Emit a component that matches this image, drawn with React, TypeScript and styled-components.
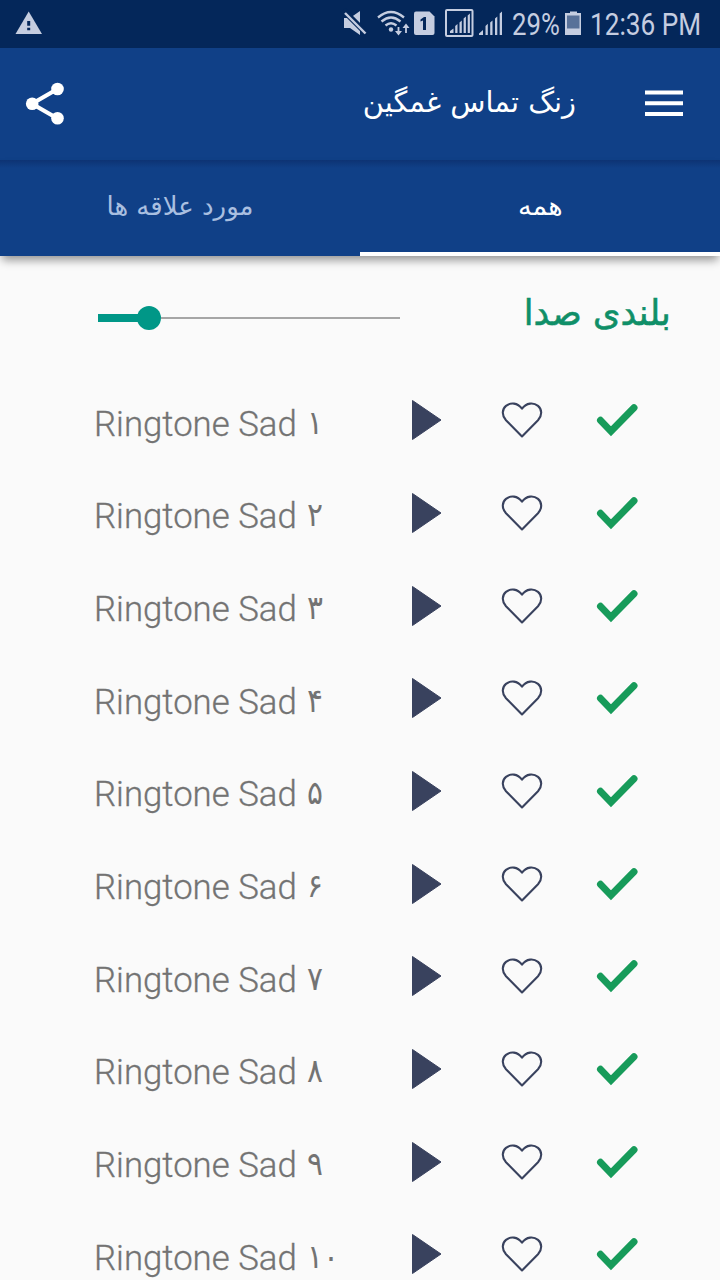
import React from 'react';
import styled, { createGlobalStyle } from 'styled-components';

const GlobalStyle = createGlobalStyle`
  * { box-sizing: border-box; }
  html, body { margin: 0; padding: 0; background: #fafafa; }
  body { overflow: hidden; }
`;

const persianFont = "'DejaVu Sans', sans-serif";

const Screen = styled.div`
  width: 720px;
  height: 1280px;
  overflow: hidden;
  display: flex;
  flex-direction: column;
  background: #fafafa;
  font-family: Roboto, sans-serif;
`;

const StatusBar = styled.div`
  flex: none;
  height: 48px;
  display: flex;
  align-items: center;
  justify-content: space-between;
  background: #04275a;
  color: #c5cde0;
`;

const StatusIcons = styled.svg`
  display: block;
  flex: none;
`;

const StatusGroup = styled.div`
  display: flex;
  align-items: center;
`;

const Stretch = styled.span<{ $w: number; $scale: number; $size: number }>`
  display: block;
  width: ${(p) => p.$w}px;
  padding-top: 1px;
  font-size: ${(p) => p.$size}px;
  line-height: 48px;
  white-space: nowrap;
  transform: scaleX(${(p) => p.$scale});
  transform-origin: 0 50%;
`;

const AppBar = styled.header`
  flex: none;
  height: 112px;
  display: flex;
  align-items: center;
  padding: 0 36px 0 25px;
  background: #104087;
`;

const Title = styled.h1`
  flex: 1;
  margin: 0 69px 4px 0;
  direction: rtl;
  color: #fff;
  font: 400 29px/40px ${persianFont};
  white-space: nowrap;
  transform: scaleX(0.995);
  transform-origin: 100% 50%;
`;

const Tabs = styled.nav`
  flex: none;
  height: 96px;
  display: flex;
  background: linear-gradient(#0d3373, #104087 8px);
  box-shadow: 0 6px 9px -2px rgba(0, 0, 0, 0.42);
`;

const Tab = styled.div<{ $active?: boolean }>`
  flex: 1;
  display: flex;
  align-items: center;
  justify-content: center;
  padding-bottom: 1px;
  border-bottom: 4px solid ${(p) => (p.$active ? '#fff' : 'transparent')};
  color: ${(p) => (p.$active ? '#fff' : '#a9bfe0')};
`;

const TabLabel = styled.span<{ $scale: number }>`
  direction: rtl;
  font: 400 26px/36px ${persianFont};
  white-space: nowrap;
  transform: scaleX(${(p) => p.$scale});
`;

const Volume = styled.section`
  flex: none;
  height: 118px;
  display: flex;
  align-items: center;
  justify-content: space-between;
  padding: 0 49px 0 98px;
`;

const Slider = styled.div`
  width: 302px;
  height: 24px;
  display: flex;
  align-items: center;
  margin-top: 6px;
`;

const SliderFill = styled.div`
  width: 40px;
  height: 8px;
  background: #009787;
`;

const SliderThumb = styled.div`
  width: 24px;
  height: 24px;
  margin-left: -1px;
  border-radius: 50%;
  background: #009787;
`;

const SliderRest = styled.div`
  flex: 1;
  height: 2px;
  background: #a6a6a6;
`;

const VolumeLabel = styled.h2`
  margin: 0 0 4px;
  direction: rtl;
  color: #0f8f68;
  font: 400 36px/48px ${persianFont};
  -webkit-text-stroke: 0.6px #0f8f68;
  white-space: nowrap;
  transform: scaleX(0.975);
  transform-origin: 100% 50%;
`;

const List = styled.ul`
  list-style: none;
  margin: 0;
  padding: 0;
`;

const Row = styled.li`
  height: 92.67px;
  display: flex;
  align-items: center;
  padding-left: 94px;
`;

const Name = styled.div`
  width: 318px;
  height: 42px;
  display: flex;
  align-items: baseline;
  margin-top: 9px;
  color: #737373;
  white-space: nowrap;
`;

const Latin = styled.span`
  width: 213px;
  font-size: 35px;
  font-weight: 300;
  line-height: 42px;
  -webkit-text-stroke: 0.3px #737373;
  transform: scaleX(0.993);
  transform-origin: 0 50%;
`;

const Digit = styled.span`
  font: 400 33px/42px ${persianFont};
  transform: translateY(-2px) scaleX(0.9);
  transform-origin: 0 50%;
`;

const RowIcon = styled.svg<{ $ml?: number }>`
  display: block;
  flex: none;
  margin-left: ${(p) => p.$ml ?? 0}px;
`;

const digits = ['۱', '۲', '۳', '۴', '۵', '۶', '۷', '۸', '۹', '۱۰'];

export default function App() {
  return (
    <Screen>
      <GlobalStyle />
      <StatusBar>
        <StatusIcons width="60" height="48" viewBox="0 0 60 48">
          <path d="M28.700 11.500L42 34H15.500Z" fill="#c5cde0" />
          <path d="M27.200 21h3v4.800h-3zM27.200 27.700h3v2.500h-3z" fill="#04275a" />
        </StatusIcons>
        <StatusGroup>
          <StatusIcons width="172" height="48" viewBox="340 0 172 48" fill="#c5cde0">
            <path d="M344 18h6l10-7v24l-10-7h-6z" />
            <path d="M343 10l24 24" stroke="#04275a" strokeWidth="6" />
            <path d="M345 13l20.500 20.500" stroke="#c5cde0" strokeWidth="2.400" />
            <g fill="none" stroke="#c5cde0" strokeWidth="2.300">
              <path d="M378 17.500Q391 6.500 404 17.500M381.500 21.500Q391 13.500 400.500 21.500M385.500 25.500Q391 21 396.500 25.500" />
              <path d="M398.500 27v6.500M406 33v-7" strokeWidth="1.800" />
            </g>
            <circle cx="391" cy="29.500" r="2.200" />
            <path d="M395 31h7l-3.500 4.500zM402.500 28h7L406 23.500z" />
            <path d="M416 11.500h13.500l5 5V33q0 2-2 2H416q-2 0-2-2V13.500q0-2 2-2z" />
            <path d="M420.500 19.500l3.500-2.500h2v13h-3V20.500l-2.500 1z" fill="#04275a" />
            <rect x="446" y="10" width="26.500" height="26" rx="1" fill="none" stroke="#c5cde0" strokeWidth="2" />
            <path d="M450 33v-2l3.500-2.500V33zM455.200 33v-7l2.300-2v9zM459.500 33V22.500l2.300-2V33zM463.600 33V18.500l2.300-2V33zM467.700 33V15.500l2.200-2V33z" />
            <path d="M479 35v-1.500l4-3.500v5zM485.500 35v-9l2.300-2.200V35zM490.200 35V22.500l2.300-2V35zM495 35V18.500l2.300-2V35zM499.700 35V13.500l2.300-2V35z" />
          </StatusIcons>
          <Stretch $w={53} $scale={0.83} $size={31}>29%</Stretch>
          <StatusIcons width="25" height="48" viewBox="565 0 25 48">
            <path d="M570 11.500h7v1.500h4v22h-16V13h5z" fill="#c5cde0" />
            <path d="M567 15.500h12.500v13H567z" fill="#587199" />
          </StatusIcons>
          <Stretch $w={130} $scale={0.845} $size={31}>12:36 PM</Stretch>
        </StatusGroup>
      </StatusBar>
      <AppBar>
        <StatusIcons width="40" height="44" viewBox="25 82 40 44">
          <path d="M57.500 89L32 103.700l25.500 14.800" fill="none" stroke="#fff" strokeWidth="4.200" />
          <circle cx="57.500" cy="89" r="6.300" fill="#fff" />
          <circle cx="32.200" cy="103.700" r="6.300" fill="#fff" />
          <circle cx="57.500" cy="118.300" r="6.300" fill="#fff" />
        </StatusIcons>
        <Title>زنگ تماس غمگین</Title>
        <StatusIcons width="39" height="28" viewBox="645 90 39 28">
          <path d="M645 90.500h38v4h-38zM645 101.300h38v4h-38zM645 112h38v4h-38z" fill="#fff" />
        </StatusIcons>
      </AppBar>
      <Tabs>
        <Tab><TabLabel $scale={1}>مورد علاقه ها</TabLabel></Tab>
        <Tab $active><TabLabel $scale={1.05}>همه</TabLabel></Tab>
      </Tabs>
      <Volume>
        <Slider>
          <SliderFill />
          <SliderThumb />
          <SliderRest />
        </Slider>
        <VolumeLabel>بلندی صدا</VolumeLabel>
      </Volume>
      <List>
        {digits.map((d) => (
          <Row key={d}>
            <Name>
              <Latin>Ringtone Sad</Latin>
              <Digit>{d}</Digit>
            </Name>
            <RowIcon width="30" height="42" viewBox="1 0 30 42">
              <path d="M1.500 1.500L30 21L1.500 40.500Z" fill="#39425e" stroke="#39425e" strokeLinejoin="round" />
            </RowIcon>
            <RowIcon $ml={59} width="42" height="42" viewBox="501 398.800 42 42">
              <path
                d="M522 436.200L506 420C501.500 415 502 409 506 405.700C510.500 402 517.500 402.300 522 408.500C526.500 402.300 533.500 402 538 405.700C542 409 542.500 415 538 420Z"
                fill="none" stroke="#39425e" strokeWidth="2.100" strokeLinejoin="round"
              />
            </RowIcon>
            <RowIcon $ml={53} width="42" height="42" viewBox="596 399 42 42">
              <path d="M600.500 420.300L611 431.300L634 407.800" fill="none" stroke="#179b5a" strokeWidth="7" strokeLinecap="round" strokeLinejoin="miter" />
            </RowIcon>
          </Row>
        ))}
      </List>
    </Screen>
  );
}
